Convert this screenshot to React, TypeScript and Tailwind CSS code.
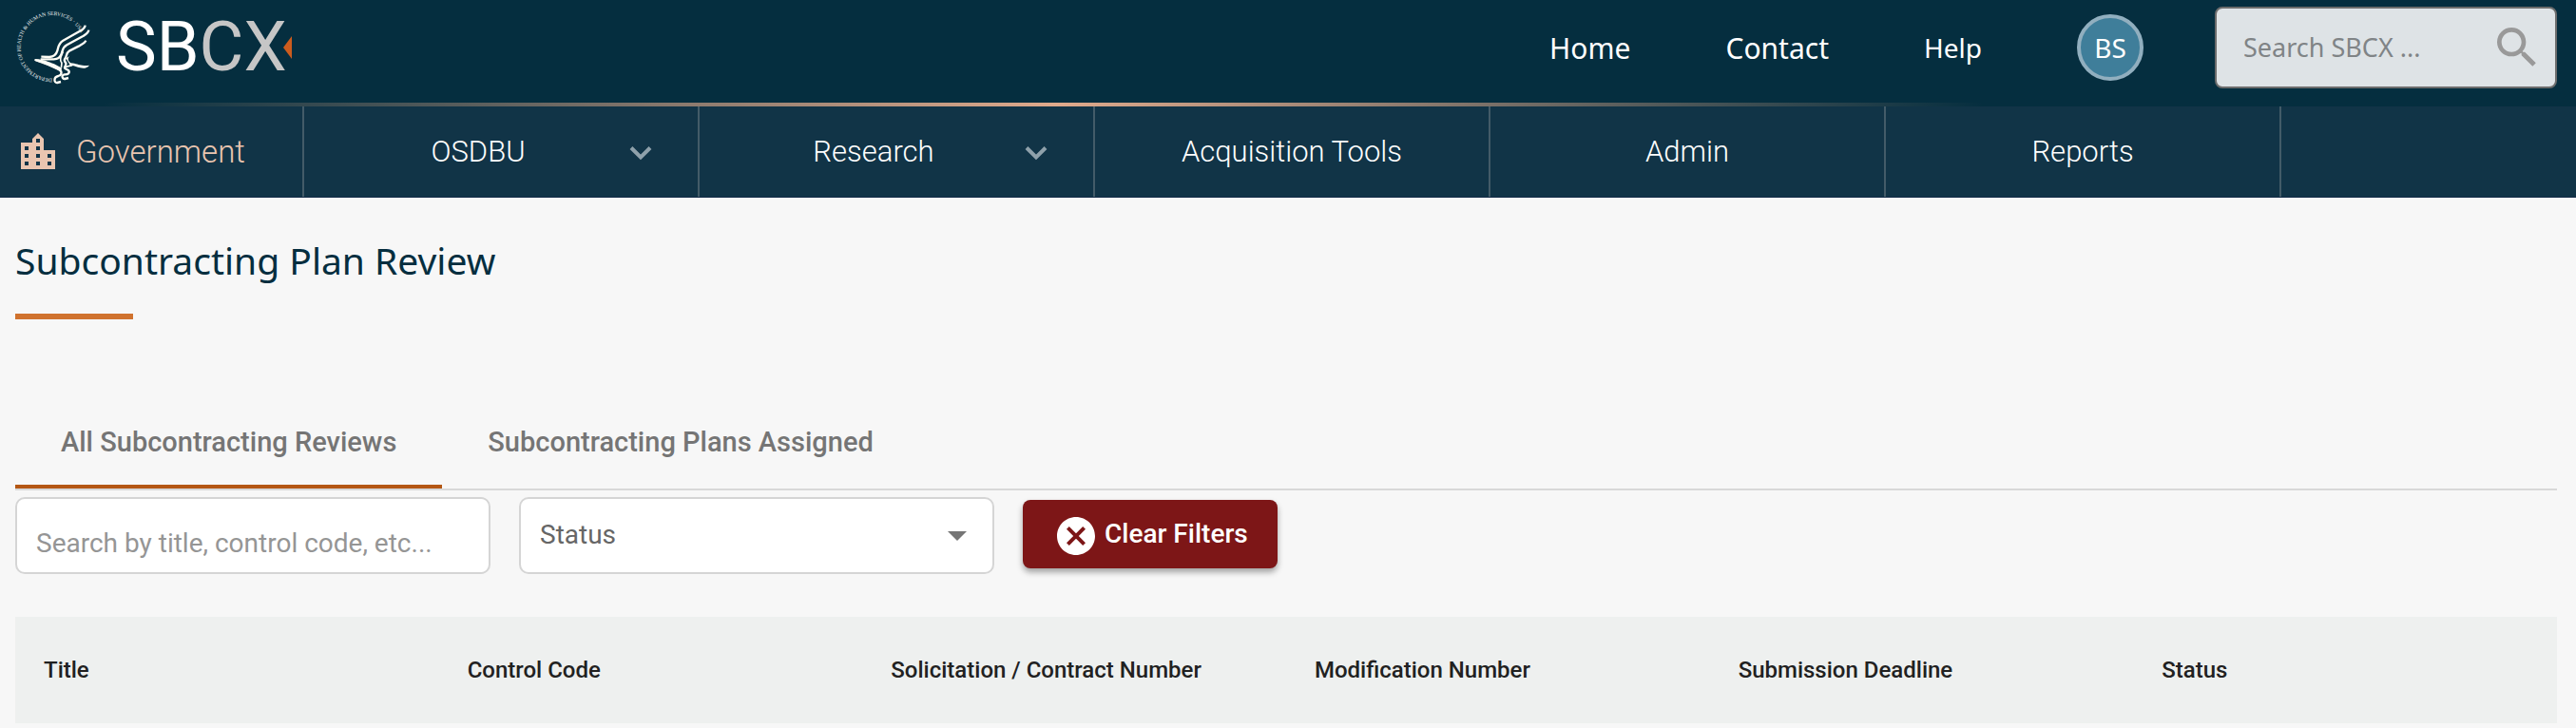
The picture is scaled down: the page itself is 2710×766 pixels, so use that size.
import React from "react";

const navItems = [
  { label: "OSDBU", menu: true },
  { label: "Research", menu: true },
  { label: "Acquisition Tools", menu: false },
  { label: "Admin", menu: false },
  { label: "Reports", menu: false },
];

const columns = [
  "Title",
  "Control Code",
  "Solicitation / Contract Number",
  "Modification Number",
  "Submission Deadline",
  "Status",
];

function Seal() {
  return (
    <svg viewBox="30 15 270 270" className="size-[90px] shrink-0" aria-hidden="true">
      <path id="seal-ring" d="M165 248 A100 100 0 1 1 265 148" fill="none" />
      <text fontSize="17" fill="#eef2f2" className="font-['Liberation_Serif',serif]">
        <textPath href="#seal-ring">DEPARTMENT OF HEALTH &amp; HUMAN SERVICES · USA</textPath>
      </text>
      <g fill="none" stroke="#fffef6" strokeWidth="7" strokeLinejoin="round">
        <path d="M269 80 C268 88 262 93 252 98 L199 128 C184 137 185 147 181 160 C177 174 169 179 156 180 L130 179" />
        <path d="M280 95 C279 104 270 109 262 114 L211 142 C197 150 198 158 194 170 C190 182 183 187 170 187 L128 187" />
        <path d="M271 128 C268 136 258 140 248 146 L220 160 C207 168 212 176 206 184 C201 190 203 194 208 199 C211 206 201 209 205 216 L216 222 C222 230 214 236 204 235 C192 236 196 250 205 249 L216 246" />
        <path d="M111 189 L136 196 L180 215 C198 223 197 236 184 240 C168 243 170 263 181 261 L192 258" />
        <path d="M199 163 C193 178 188 184 192 193 C199 201 192 204 194 213" strokeWidth="5" />
        <path d="M207 211 L228 206" strokeWidth="5" />
      </g>
      <path d="M208 184 L219 178 C212 187 216 194 223 199 C240 200 249 206 260 206 C268 207 274 207 282 206 C275 215 265 217 253 214 C242 212 235 206 222 207 Z" fill="#fffef6" />
      <path d="M109 187 C125 184 151 193 171 202 L196 215 L190 226 C164 210 138 203 109 191 Z" fill="#fffef6" />
    </svg>
  );
}

function Chevron() {
  return (
    <svg viewBox="0 0 24 16" className="h-4 w-6 shrink-0" aria-hidden="true">
      <path d="M2 2.5 L12 12.5 L22 2.5" fill="none" stroke="#8fa1ab" strokeWidth="4" />
    </svg>
  );
}

export default function App() {
  const [tab, setTab] = React.useState(0);
  const tabs = ["All Subcontracting Reviews", "Subcontracting Plans Assigned"];

  return (
    <div className="min-h-screen bg-[#f7f7f7] font-['Roboto',sans-serif]">
      <header className="bg-[#052e3f] font-['Noto_Sans',sans-serif] text-white">
        <div className="mb-2 flex h-[100px] items-center justify-between pr-5 pl-[10px]">
          <a href="#home" aria-label="SBCX" className="flex items-center">
            <Seal />
            <span className="pl-[22px] font-['Roboto',sans-serif] text-[72px] leading-none">
              SB<span className="text-[#c6c6c6]">CX</span>
            </span>
            <svg viewBox="0 0 9 24" className="-ml-1 h-6 w-[9px]" aria-hidden="true">
              <path d="M9 0 V24 L0 12 Z" fill="#cc5c1e" />
            </svg>
          </a>
          <div className="flex items-center">
            <nav className="flex items-center gap-[100px] pr-[100px] text-[30px]">
              <a href="#home">Home</a>
              <a href="#contact">Contact</a>
              <a href="#help" className="text-[28px]">Help</a>
            </nav>
            <button
              type="button"
              className="mr-[75px] flex size-[70px] items-center justify-center rounded-full border-4 border-[#91afbf] bg-[#3f7e9a] text-[28px]"
            >
              BS
            </button>
            <label className="flex h-[86px] w-[360px] items-center rounded-[8px] border-2 border-[#6c6c6c] bg-[#dee3e6] pr-3 pl-7">
              <input
                type="search"
                aria-label="Search SBCX"
                placeholder="Search SBCX ..."
                className="min-w-0 flex-1 bg-transparent text-[27px] text-[#333] outline-none placeholder:text-[#808486]"
              />
              <svg viewBox="0 0 24 24" className="size-14 shrink-0" fill="#999999" aria-hidden="true">
                <path d="M15.5 14h-.79l-.28-.27A6.471 6.471 0 0 0 16 9.5 6.5 6.5 0 1 0 9.5 16c1.61 0 3.09-.59 4.23-1.57l.27.28v.79l5 4.99L20.49 19l-4.99-5zm-6 0C7.01 14 5 11.99 5 9.5S7.01 5 9.5 5 14 7.01 14 9.5 11.99 14 9.5 14z" />
              </svg>
            </label>
          </div>
        </div>
        <div className="h-1 bg-[linear-gradient(90deg,transparent_4%,#e0aa8c_41%,transparent_77%)]" />
      </header>

      <nav className="flex h-24 border-b border-[#142c48] bg-[#113447] text-[31px] font-light text-white">
        <a
          href="#government"
          className="flex w-80 items-center border-r-2 border-[#435b68] pl-4 text-[33px] text-[#e9c5b0]"
        >
          <svg viewBox="0 0 24 24" className="size-12" fill="currentColor" aria-hidden="true">
            <path d="M15 11V5l-3-3-3 3v2H3v14h18V11h-6zm-8 8H5v-2h2v2zm0-4H5v-2h2v2zm0-4H5V9h2v2zm6 8h-2v-2h2v2zm0-4h-2v-2h2v2zm0-4h-2V9h2v2zm0-4h-2V5h2v2zm6 12h-2v-2h2v2zm0-4h-2v-2h2v2z" />
          </svg>
          <span className="pl-4">Government</span>
        </a>
        {navItems.map((item) =>
          item.menu ? (
            <button
              key={item.label}
              type="button"
              className="flex w-[416px] items-center border-r-2 border-[#435b68] pt-[2px] pr-12 pl-6"
            >
              <span className="flex-1 text-center">{item.label}</span>
              <Chevron />
            </button>
          ) : (
            <a
              key={item.label}
              href="#section"
              className="flex w-[416px] items-center justify-center border-r-2 border-[#435b68] pt-[2px]"
            >
              {item.label}
            </a>
          ),
        )}
      </nav>

      <main className="pr-5 pl-4">
        <h1 className="pt-[38px] font-['Noto_Sans',sans-serif] text-[39px] leading-[56px] text-[#052e3f]">
          Subcontracting Plan Review
        </h1>
        <div className="mt-7 h-[6px] w-[124px] bg-[#d0722e]" />

        <div role="tablist" className="mt-[84px] flex border-b-2 border-[#d8d8d8]">
          {tabs.map((label, i) => (
            <button
              key={label}
              type="button"
              role="tab"
              aria-selected={tab === i}
              onClick={() => setTab(i)}
              className={
                tab === i
                  ? "h-[94px] border-b-4 border-[#b45714] px-12 pt-[2px] text-[29px] font-medium text-[#757575]"
                  : "h-[94px] border-b-4 border-transparent px-12 pt-[2px] text-[29px] font-medium text-[#757575]"
              }
            >
              {label}
            </button>
          ))}
        </div>

        <div className="mt-[7px] flex gap-[30px]">
          <input
            type="text"
            aria-label="Search reviews"
            placeholder="Search by title, control code, etc..."
            className="h-[81px] w-[500px] rounded-[10px] border-2 border-[#d5d5d5] bg-white px-5 pt-4 text-[28px] text-[#333] outline-none placeholder:text-[#959595]"
          />
          <div className="relative h-[81px] w-[500px]">
            <select
              aria-label="Status"
              className="size-full appearance-none rounded-[10px] border-2 border-[#d5d5d5] bg-white px-5 pb-[2px] text-[28px] text-[#666] outline-none"
            >
              <option>Status</option>
            </select>
            <svg
              viewBox="0 0 20 10"
              className="pointer-events-none absolute top-9 right-[29px] h-[10px] w-5"
              aria-hidden="true"
            >
              <path d="M0 0 H20 L10 10 Z" fill="#757575" />
            </svg>
          </div>
          <button
            type="button"
            className="mt-[3px] flex h-[72px] w-[268px] items-center rounded-[8px] bg-[#7d1617] pl-8 text-[28px] font-medium text-white shadow-[0_4px_6px_rgba(0,0,0,0.35)]"
          >
            <svg viewBox="0 0 24 24" className="mt-1 size-12 shrink-0" fill="currentColor" aria-hidden="true">
              <path d="M12 2C6.47 2 2 6.47 2 12s4.47 10 10 10 10-4.47 10-10S17.53 2 12 2zm5 13.59L15.59 17 12 13.41 8.41 17 7 15.59 10.59 12 7 8.41 8.41 7 12 10.59 15.59 7 17 8.41 13.41 12 17 15.59z" />
            </svg>
            <span className="pl-[6px]">Clear Filters</span>
          </button>
        </div>

        <table className="mt-[45px] w-full table-fixed bg-[#eef0ef]">
          <thead>
            <tr className="h-28">
              {columns.map((name) => (
                <th key={name} scope="col" className="pl-[30px] text-left text-[24px] font-medium text-[#212121]">
                  {name}
                </th>
              ))}
            </tr>
          </thead>
        </table>
      </main>
    </div>
  );
}
